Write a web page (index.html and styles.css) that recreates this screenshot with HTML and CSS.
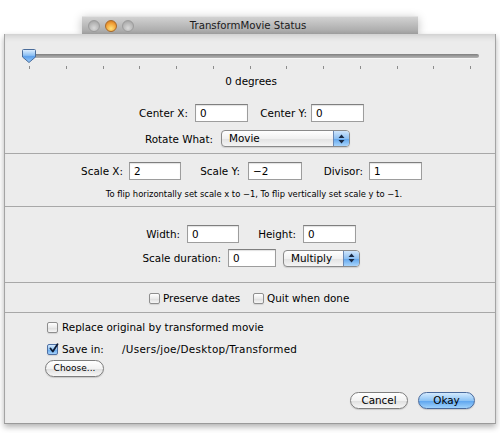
FILE: index.html
```html
<!DOCTYPE html>
<html>
<head>
<meta charset="utf-8">
<link rel="stylesheet" href="styles.css">
</head>
<body>
<div class="scene">
  <div class="titlebar">
    <div class="lights">
      <span class="light gray"></span>
      <span class="light orange"></span>
      <span class="light gray"></span>
    </div>
    <div class="title">TransformMovie Status</div>
  </div>
  <div class="sheet">
    <section class="sec s1">
      <div class="slider">
        <div class="track"></div>
        <svg class="knob" width="16" height="16" viewBox="0 0 16 16">
          <defs>
            <linearGradient id="kg" x1="0" y1="0" x2="0" y2="1">
              <stop offset="0" stop-color="#e2f1ff"/>
              <stop offset="0.45" stop-color="#8cc0f4"/>
              <stop offset="0.55" stop-color="#5c9fea"/>
              <stop offset="1" stop-color="#9ccdfa"/>
            </linearGradient>
          </defs>
          <path d="M2.5 1.5 H13.5 Q14.5 1.5 14.5 2.5 V9 L8 14.5 L1.5 9 V2.5 Q1.5 1.5 2.5 1.5 Z" fill="url(#kg)" stroke="#4a6c9a" stroke-width="1"/>
        </svg>
        <div class="ticks">
          <i></i><i></i><i></i><i></i><i></i><i></i><i></i><i></i><i></i><i></i><i></i><i></i><i></i>
        </div>
      </div>
      <div class="degrees">0 degrees</div>
      <div class="row r-center">
        <span class="lab w53">Center X:</span>
        <span class="inp ml7 w53">0</span>
        <span class="lab w59">Center Y:</span>
        <span class="inp ml4 w53">0</span>
      </div>
      <div class="row r-rotate">
        <span class="lab w73">Rotate What:</span>
        <span class="popup ml8 w129"><span class="ptxt">Movie</span><span class="cap"><svg width="7" height="10" viewBox="0 0 7 10"><path d="M3.5 0.5 L6.5 4 H0.5 Z M3.5 9.5 L6.5 6 H0.5 Z" fill="#1a2a44"/></svg></span></span>
      </div>
    </section>
    <section class="sec s2">
      <div class="row r-scale">
        <span class="lab w53">Scale X:</span>
        <span class="inp ml6 w52">2</span>
        <span class="lab w59">Scale Y:</span>
        <span class="inp ml8 w54">−2</span>
        <span class="lab w61">Divisor:</span>
        <span class="inp ml6 w53">1</span>
      </div>
      <div class="note">To flip horizontally set scale x to −1, To flip vertically set scale y to −1.</div>
    </section>
    <section class="sec s3">
      <div class="row r-size">
        <span class="lab w40">Width:</span>
        <span class="inp ml7 w52">0</span>
        <span class="lab w57">Height:</span>
        <span class="inp ml7 w53">0</span>
      </div>
      <div class="row r-dur">
        <span class="lab w81">Scale duration:</span>
        <span class="inp ml7 w48">0</span>
        <span class="popup ml7 w77"><span class="ptxt">Multiply</span><span class="cap"><svg width="7" height="10" viewBox="0 0 7 10"><path d="M3.5 0.5 L6.5 4 H0.5 Z M3.5 9.5 L6.5 6 H0.5 Z" fill="#1a2a44"/></svg></span></span>
      </div>
    </section>
    <section class="sec s4">
      <div class="row r-checks">
        <span class="cb"></span>
        <span class="cbtext w74">Preserve dates</span>
        <span class="cb ml16"></span>
        <span class="cbtext">Quit when done</span>
      </div>
    </section>
    <section class="sec s5">
      <div class="row r-replace">
        <span class="cb"></span>
        <span class="cbtext">Replace original by transformed movie</span>
      </div>
      <div class="row r-save">
        <span class="cb checked"><svg width="11" height="11" viewBox="0 0 11 11"><path d="M2.5 5.5 L4.8 8.5 L9.5 1.2" fill="none" stroke="#0d1a33" stroke-width="1.8" stroke-linecap="round" stroke-linejoin="round"/></svg></span>
        <span class="cbtext w60">Save in:</span>
        <span class="path">/Users/joe/Desktop/Transformed</span>
      </div>
      <div class="row r-choose">
        <span class="btn small">Choose...</span>
      </div>
      <div class="row r-buttons">
        <span class="btn w58">Cancel</span>
        <span class="btn blue w57">Okay</span>
      </div>
    </section>
  </div>
</div>
</body>
</html>
```

FILE: styles.css
```css
html, body {
  margin: 0;
  padding: 0;
  background: #ffffff;
}
body {
  width: 500px;
  height: 433px;
  overflow: hidden;
  font-family: "DejaVu Sans", "Liberation Sans", sans-serif;
  font-size: 10.4px;
  color: #000;
}
.scene {
  display: flex;
  flex-direction: column;
  padding-top: 16px;
}
.titlebar {
  align-self: center;
  width: 336px;
  height: 18px;
  background: linear-gradient(#d2d2d2, #b6b6b6 60%, #a4a4a4);
  border-top: 1px solid #e2e2e2;
  box-sizing: border-box;
  box-shadow: 0 2px 10px rgba(0,0,0,0.25);
  display: flex;
  align-items: center;
}
.lights {
  display: flex;
  gap: 5px;
  padding-left: 6px;
}
.light {
  width: 12px;
  height: 12px;
  border-radius: 50%;
  box-sizing: border-box;
}
.light.gray {
  background: radial-gradient(circle at 50% 70%, #d9d9d9, #b5b5b5 60%, #9a9a9a);
  border: 1px solid #9c9c9c;
}
.light.orange {
  background: radial-gradient(circle at 50% 75%, #ffe27a, #f3a33a 55%, #c86c14);
  border: 1px solid #a86a2a;
}
.title {
  flex: 1;
  text-align: center;
  margin-left: -56px;
  font-size: 10.2px;
  color: #1a1a1a;
}
.sheet {
  margin: 0 4px;
  height: 389px;
  background: #ececec;
  border-left: 1px solid #a4a4a4;
  border-right: 1px solid #a4a4a4;
  border-bottom: 1px solid #9a9a9a;
  box-shadow: 0 3px 6px rgba(0,0,0,0.3), inset 0 6px 6px -4px rgba(0,0,0,0.15);
  display: flex;
  flex-direction: column;
}
.sec {
  box-sizing: border-box;
  border-bottom: 1px solid #a8a8a8;
  display: flex;
  flex-direction: column;
}
.s1 { height: 120px; }
.s2 { height: 53px; padding-top: 8px; }
.s3 { height: 76px; padding-top: 18px; }
.s4 { height: 30px; padding-top: 8px; }
.s5 { height: 110px; padding-top: 7px; border-bottom: none; }

.slider {
  position: relative;
  margin: 16px 0 0 19px;
  width: 455px;
  height: 20px;
}
.track {
  position: absolute;
  left: 0;
  right: 0;
  top: 4px;
  height: 4px;
  border-radius: 2px;
  background: linear-gradient(#7e7e7e, #9c9c9c 50%, #b4b4b4);
  box-shadow: 0 1px 0 #f6f6f6;
}
.knob {
  position: absolute;
  left: -3px;
  top: -2px;
}
.ticks {
  position: absolute;
  left: 5px;
  width: 442px;
  top: 16px;
  display: flex;
  justify-content: space-between;
}
.ticks i {
  display: block;
  width: 1px;
  height: 3px;
  background: #8c8c8c;
}
.degrees {
  margin-top: 4px;
  height: 14px;
  line-height: 14px;
  text-align: center;
  padding-left: 2px;
}
.row {
  display: flex;
  align-items: center;
  white-space: nowrap;
}
.r-center { margin-top: 16px; padding-left: 130px; height: 18px; }
.r-rotate { margin-top: 8px; padding-left: 135px; height: 17px; }
.r-scale { padding-left: 65px; height: 18px; }
.r-size { padding-left: 135px; height: 18px; }
.r-dur { margin-top: 6px; padding-left: 135px; height: 18px; }
.r-checks { padding-left: 144px; height: 14px; }
.r-replace { padding-left: 42px; height: 14px; }
.r-save { margin-top: 8px; padding-left: 42px; height: 14px; }
.r-choose { margin-top: 4px; padding-left: 40px; height: 17px; }
.r-buttons { margin-top: 15px; justify-content: flex-end; padding-right: 20px; gap: 10px; height: 17px; }

.lab { text-align: right; flex: none; }
.w40 { width: 40px; }
.w48 { width: 48px; }
.w52 { width: 52px; }
.w53 { width: 53px; }
.w54 { width: 54px; }
.w57 { width: 57px; }
.w58 { width: 58px; }
.w59 { width: 59px; }
.w60 { width: 60px; }
.w61 { width: 61px; }
.w73 { width: 73px; }
.w74 { width: 74px; }
.w77 { width: 77px; }
.w81 { width: 81px; }
.w129 { width: 129px; }
.ml4 { margin-left: 4px; }
.ml6 { margin-left: 6px; }
.ml7 { margin-left: 7px; }
.ml8 { margin-left: 8px; }
.ml16 { margin-left: 16px; }

.inp {
  flex: none;
  box-sizing: border-box;
  height: 18px;
  background: #fff;
  border: 1px solid #9d9d9d;
  border-top-color: #7f7f7f;
  box-shadow: inset 0 1px 1px rgba(0,0,0,0.12);
  padding-left: 4px;
  line-height: 16px;
}
.popup {
  flex: none;
  box-sizing: border-box;
  height: 17px;
  border: 1px solid #8a8a8a;
  border-radius: 4px;
  background: linear-gradient(#ffffff, #f1f1f1 50%, #e2e2e2 51%, #f4f4f4);
  display: flex;
  align-items: center;
  overflow: hidden;
  box-shadow: 0 1px 1px rgba(0,0,0,0.12);
}
.ptxt {
  flex: 1;
  padding-left: 7px;
  line-height: 15px;
}
.cap {
  flex: none;
  width: 15px;
  height: 15px;
  border-left: 1px solid #6a88b4;
  background: linear-gradient(#cfe5fb, #8ec0f2 50%, #5ea4ec 51%, #a8d4fb);
  display: flex;
  align-items: center;
  justify-content: center;
}
.note {
  margin-top: 8px;
  height: 12px;
  line-height: 12px;
  font-size: 8.4px;
  text-align: center;
  padding-left: 8px;
}
.cb {
  flex: none;
  box-sizing: border-box;
  width: 11px;
  height: 11px;
  border: 1px solid #8e8e8e;
  border-radius: 2px;
  background: linear-gradient(#ffffff, #eaeaea 50%, #dcdcdc 51%, #f6f6f6);
  box-shadow: 0 1px 1px rgba(0,0,0,0.1);
  display: flex;
  align-items: center;
  justify-content: center;
}
.cb.checked {
  border-color: #4f70a4;
  background: linear-gradient(#d2e8fd, #8fc2f3 50%, #62a7ec 51%, #a6d2fb);
  overflow: visible;
}
.cb.checked svg {
  flex: none;
  margin-top: -2px;
  margin-left: 1px;
}
.cbtext {
  flex: none;
  margin-left: 3px;
  line-height: 14px;
}
.r-replace .cbtext, .r-save .cbtext { margin-left: 4px; }
.path { flex: none; letter-spacing: 0.3px; }
.btn {
  flex: none;
  box-sizing: border-box;
  height: 17px;
  border: 1px solid #7e7e7e;
  border-radius: 9px;
  background: linear-gradient(#ffffff, #f2f2f2 50%, #dedede 51%, #f7f7f7);
  box-shadow: 0 1px 1px rgba(0,0,0,0.15);
  text-align: center;
  line-height: 15px;
}
.btn.small {
  width: 59px;
  font-size: 9px;
}
.btn.blue {
  border-color: #4a6a9c;
  background: linear-gradient(#d3eafe, #8ec4f5 50%, #5aa3ee 51%, #9fd2fc);
}
```
